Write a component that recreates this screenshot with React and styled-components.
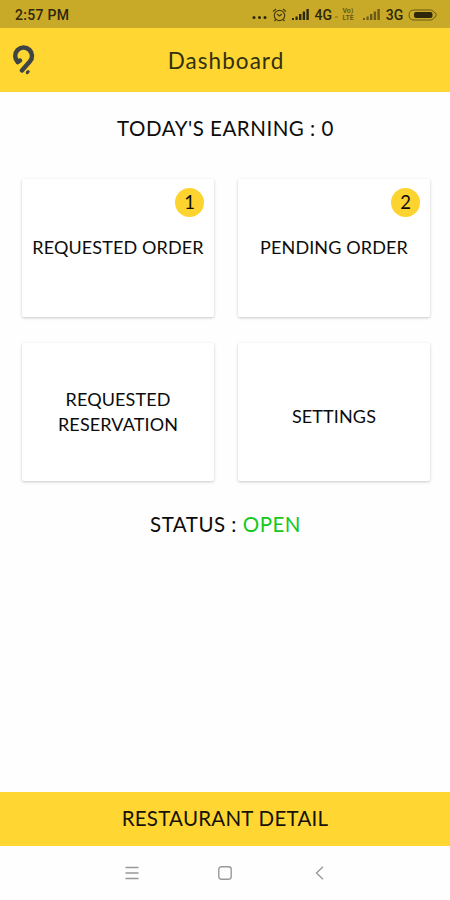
import React from 'react';
import styled, { createGlobalStyle } from 'styled-components';

const cards = [
  { label: 'REQUESTED ORDER', count: 1 },
  { label: 'PENDING ORDER', count: 2 },
  { label: 'REQUESTED RESERVATION' },
  { label: 'SETTINGS', shift: 9 },
];

function Signal({ faded }) {
  return (
    <svg width='18' height='13' viewBox='0 0 18 13' fill='#2e270c' opacity={faded ? 0.6 : 1}>
      <rect x='0' y='10' width='2' height='2' />
      <rect x='3.5' y='8.5' width='2.2' height='3.5' />
      <rect x='7' y='6' width='2.4' height='6' />
      <rect x='10.7' y='3.5' width='2.4' height='8.5' />
      <rect x='14.4' y='1' width='2.4' height='11' />
    </svg>
  );
}

function StatusBar() {
  return (
    <StyledStatusBar>
      <Clock>2:57 PM</Clock>
      <StatusIcons>
        <svg width='16' height='13' viewBox='0 0 16 13' fill='#2e270c'>
          <circle cx='2' cy='9.5' r='1.5' />
          <circle cx='7.5' cy='9.5' r='1.5' />
          <circle cx='13' cy='9.5' r='1.5' />
        </svg>
        <AlarmIcon width='15' height='14' viewBox='0 0 15 14'>
          <circle cx='7.5' cy='7.5' r='5.2' />
          <path d='M1 3.5 L4 1 M14 3.5 L11 1 M5 6 L7.5 8 L10 6 M3.8 11.5 L2.5 13 M11.2 11.5 L12.5 13' />
        </AlarmIcon>
        <Signal />
        <Network>4G</Network>
        <Dot />
        <Volte>
          <span>Vo)</span>
          <span>LTE</span>
        </Volte>
        <Signal faded />
        <Network>3G</Network>
        <svg width='29' height='14' viewBox='0 0 29 14'>
          <path d='M6 2 H23 Q25 2 26 4.5 Q28.2 4.5 28.2 7 Q28.2 9.5 26 9.5 Q25 12 23 12 H6 Q1 12 1 7 Q1 2 6 2 Z' fill='none' stroke='#6b5a17' />
          <rect x='6' y='4' width='18.5' height='6' rx='2' fill='#2e270c' />
        </svg>
      </StatusIcons>
    </StyledStatusBar>
  );
}

function App() {
  return (
    <Screen>
      <GlobalStyle />
      <StatusBar />
      <Header>
        <Logo width='24' height='30' viewBox='0 0 24 30'>
          <path d='M5.8 17 A8.4 8.4 0 1 1 17.8 16.6 L9.9 25.4' />
          <path d='M5.8 16.8 L8 15.6' />
          <path className='dot' d='M15.2 27.6 L16.2 26.6' />
        </Logo>
        <Title>Dashboard</Title>
      </Header>
      <Earning>TODAY'S EARNING : 0</Earning>
      <Grid>
        {cards.map((card) => (
          <Card key={card.label}>
            {card.count && <Badge>{card.count}</Badge>}
            <CardLabel $shift={card.shift}>{card.label}</CardLabel>
          </Card>
        ))}
      </Grid>
      <Status>
        STATUS : <span>OPEN</span>
      </Status>
      <DetailButton>RESTAURANT DETAIL</DetailButton>
      <NavBar>
        <svg width='14' height='14' viewBox='0 0 14 14'>
          <path d='M0.5 1.5 H13.5 M0.5 7 H13.5 M0.5 12.5 H13.5' />
        </svg>
        <svg width='14' height='14' viewBox='0 0 14 14'>
          <rect x='0.8' y='0.8' width='12.4' height='12.4' rx='2.6' />
        </svg>
        <svg width='14' height='14' viewBox='0 0 14 14'>
          <path d='M12 0.8 L5.5 7 L12 13.2' />
        </svg>
      </NavBar>
    </Screen>
  );
}

export default App;

const GlobalStyle = createGlobalStyle`
  body {
    margin: 0;
    background: #fff;
  }
`;

const Screen = styled.div`
  display: flex;
  flex-direction: column;
  width: 450px;
  height: 900px;
  background: #fefefe;
  color: #0c0c0c;
  font-family: Lato, sans-serif;
`;

const StyledStatusBar = styled.div`
  display: flex;
  justify-content: space-between;
  align-items: center;
  box-sizing: border-box;
  height: 28px;
  padding: 1px 13px 0 15px;
  background: #c9aa28;
  color: #2e270c;
  font-family: Roboto, sans-serif;
`;

const Clock = styled.span`
  font-size: 14px;
  font-weight: 500;
  letter-spacing: 0.3px;
`;

const StatusIcons = styled.div`
  display: flex;
  align-items: center;
  gap: 4.7px;
`;

const AlarmIcon = styled.svg`
  fill: none;
  stroke: #4a3e10;
  stroke-width: 1.2;
`;

const Network = styled.span`
  font-size: 14px;
  font-weight: 500;
`;

const Dot = styled.span`
  width: 3px;
  height: 2px;
  margin: 4px 0 0 -2px;
  background: #a58a20;
`;

const Volte = styled.span`
  display: flex;
  flex-direction: column;
  width: 14px;
  margin-right: 2px;
  span {
    height: 7px;
    font-size: 7px;
    line-height: 7px;
    font-weight: 700;
    color: #6b5a17;
    overflow: hidden;
  }
`;

const Header = styled.header`
  display: flex;
  align-items: center;
  height: 64px;
  padding: 0 12px;
  background: #ffd632;
`;

const Logo = styled.svg`
  fill: none;
  stroke: #3f4545;
  stroke-width: 4.5;
  stroke-linecap: round;
  stroke-linejoin: round;
  .dot {
    stroke-width: 3;
  }
`;

const Title = styled.h1`
  flex: 1;
  margin: 0 22px 0 0;
  text-align: center;
  font-size: 22.5px;
  font-weight: 400;
  letter-spacing: 1.05px;
  color: #33300f;
`;

const Earning = styled.div`
  height: 86px;
  box-sizing: border-box;
  padding: 23px 0 0 1px;
  text-align: center;
  font-size: 20.5px;
  letter-spacing: 0.52px;
  line-height: 27px;
`;

const Grid = styled.div`
  display: grid;
  grid-template-columns: 192px 192px;
  grid-auto-rows: 138px;
  gap: 26px 24px;
  padding: 0.5px 21px 0 22px;
`;

const Card = styled.div`
  position: relative;
  display: flex;
  align-items: center;
  justify-content: center;
  background: #fff;
  border-radius: 2px;
  box-shadow: 0 1px 3px rgba(0, 0, 0, 0.22);
`;

const CardLabel = styled.div`
  max-width: 180px;
  padding-top: ${(props) => props.$shift || 0}px;
  text-align: center;
  font-size: 18px;
  letter-spacing: 0.12px;
  line-height: 25px;
`;

const Badge = styled.span`
  position: absolute;
  top: 9.5px;
  right: 10px;
  width: 29px;
  height: 29px;
  border-radius: 50%;
  background: #fdd330;
  text-align: center;
  font-size: 18.5px;
  line-height: 29px;
`;

const Status = styled.div`
  padding: 30.5px 0 0 1px;
  flex: 1;
  text-align: center;
  font-size: 20.5px;
  letter-spacing: 0.5px;
  line-height: 26px;
  span {
    color: #14c81e;
  }
`;

const DetailButton = styled.button`
  height: 54px;
  border: 0;
  padding: 0 0 2px;
  background: #ffd632;
  color: #15120a;
  font-family: inherit;
  font-size: 20.5px;
  letter-spacing: 0.25px;
`;

const NavBar = styled.nav`
  display: flex;
  justify-content: center;
  align-items: center;
  gap: 79px;
  height: 54px;
  svg {
    fill: none;
    stroke: #999;
    stroke-width: 1.4;
  }
`;
